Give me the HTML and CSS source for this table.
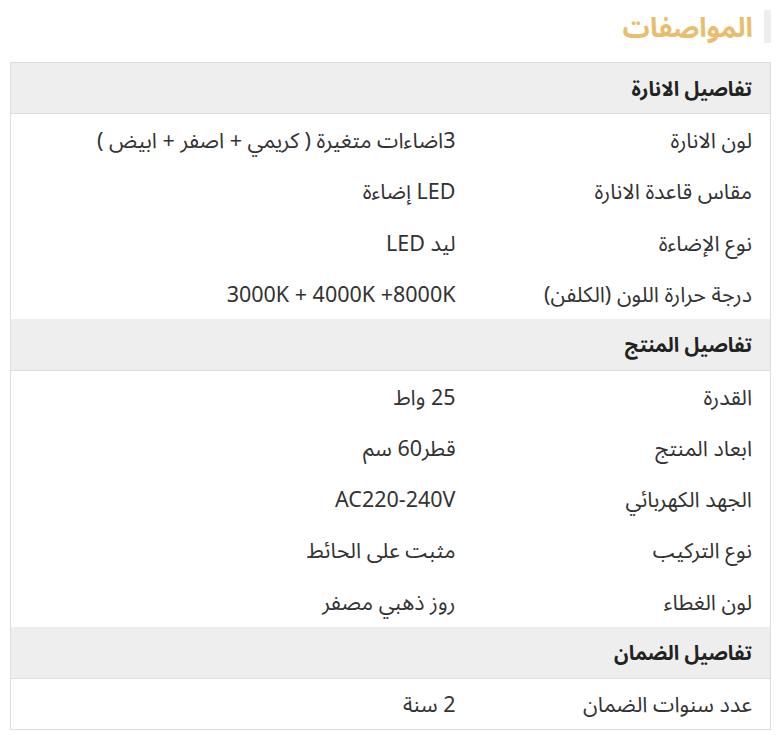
FILE: index.html
```html
<!DOCTYPE html>
<html lang="ar" dir="rtl">
<head>
<meta charset="utf-8">
<link rel="stylesheet" href="styles.css">
</head>
<body>
<div class="specs">
  <div class="title-row"><h2 class="title">المواصفات</h2></div>
  <table class="spec-table">
    <tr class="group"><th colspan="2">تفاصيل الانارة</th></tr>
    <tr><td class="label">لون الانارة</td><td class="value">3اضاءات متغيرة ( كريمي + اصفر + ابيض )</td></tr>
    <tr><td class="label">مقاس قاعدة الانارة</td><td class="value">LED إضاءة</td></tr>
    <tr><td class="label">نوع الإضاءة</td><td class="value">ليد LED</td></tr>
    <tr><td class="label">درجة حرارة اللون (الكلفن)</td><td class="value">3000K + 4000K +8000K</td></tr>
    <tr class="group"><th colspan="2">تفاصيل المنتج</th></tr>
    <tr><td class="label">القدرة</td><td class="value">25 واط</td></tr>
    <tr><td class="label">ابعاد المنتج</td><td class="value">قطر60 سم</td></tr>
    <tr><td class="label">الجهد الكهربائي</td><td class="value">AC220-240V</td></tr>
    <tr><td class="label">نوع التركيب</td><td class="value">مثبت على الحائط</td></tr>
    <tr><td class="label">لون الغطاء</td><td class="value">روز ذهبي مصفر</td></tr>
    <tr class="group"><th colspan="2">تفاصيل الضمان</th></tr>
    <tr><td class="label">عدد سنوات الضمان</td><td class="value">2 سنة</td></tr>
  </table>
</div>
</body>
</html>
```

FILE: styles.css
```css
html, body {
  margin: 0;
  padding: 0;
  background: #fff;
}
body {
  font-family: "Noto Sans Arabic", "Noto Kufi Arabic", "DejaVu Sans", sans-serif;
  color: #333;
}
.specs {
  margin: 0 13px 0 10px;
  padding-top: 10px;
}
.title-row {
  display: flex;
  justify-content: flex-start;
}
.title {
  margin: 0;
  height: 33px;
  border-right: 7px solid #eee;
  padding-right: 11px;
  font-size: 27px;
  font-weight: 700;
  color: #e9bd6c;
  line-height: 38px;
}
.spec-table {
  margin-top: 19px;
  width: 100%;
  border-collapse: collapse;
  border: 1px solid #ddd;
}
.spec-table th,
.spec-table td {
  height: 51.3px;
  padding: 3px 18px 0;
  text-align: right;
  box-sizing: border-box;
}
.group th {
  background: #eee;
  border-bottom: 1px solid #ddd;
  font-size: 20px;
  font-weight: 700;
  color: #222;
}
.spec-table td {
  font-size: 21.5px;
  color: #333;
}
.label {
  width: 297px;
}
```
